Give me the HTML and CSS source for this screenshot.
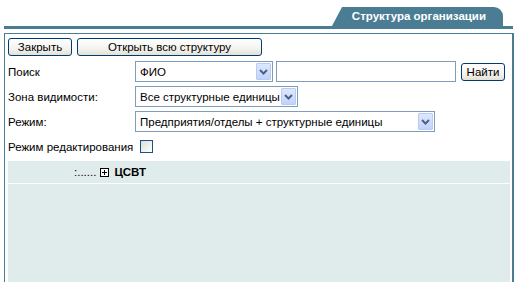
FILE: index.html
```html
<!DOCTYPE html>
<html lang="ru">
<head>
  <meta charset="UTF-8">
  <title>Структура организации</title>
  <link rel="stylesheet" href="styles.css">
</head>
<body>
  <!-- Header with tab -->
  <div class="header">
    <div class="tab">Структура организации</div>
  </div>

  <div class="frame">
    <div class="toolbar">
      <button class="btn btn-close">Закрыть</button>
      <button class="btn btn-open">Открыть всю структуру</button>
    </div>

    <div class="row">
      <div class="label">Поиск</div>
      <div class="select select-fio">
        <span class="select-text">ФИО</span>
        <span class="select-arrow"><svg width="9" height="6" viewBox="0 0 9 6"><path d="M1 1 L4.5 4.5 L8 1" fill="none" stroke="#4d6185" stroke-width="2"/></svg></span>
      </div>
      <input class="search-input" type="text">
      <button class="btn btn-find">Найти</button>
    </div>

    <div class="row">
      <div class="label">Зона видимости:</div>
      <div class="select select-zone">
        <span class="select-text">Все структурные единицы</span>
        <span class="select-arrow"><svg width="9" height="6" viewBox="0 0 9 6"><path d="M1 1 L4.5 4.5 L8 1" fill="none" stroke="#4d6185" stroke-width="2"/></svg></span>
      </div>
    </div>

    <div class="row">
      <div class="label">Режим:</div>
      <div class="select select-mode">
        <span class="select-text">Предприятия/отделы + структурные единицы</span>
        <span class="select-arrow"><svg width="9" height="6" viewBox="0 0 9 6"><path d="M1 1 L4.5 4.5 L8 1" fill="none" stroke="#4d6185" stroke-width="2"/></svg></span>
      </div>
    </div>

    <div class="row row-edit">
      <div class="label-edit">Режим редактирования</div>
      <span class="checkbox"></span>
    </div>

    <div class="tree">
      <div class="tree-row">
        <span class="dots">:......</span>
        <span class="plus"><svg width="9" height="9" viewBox="0 0 9 9"><rect x="0.5" y="0.5" width="8" height="8" fill="#fff" stroke="#000"/><path d="M2 4.5 H7 M4.5 2 V7" stroke="#000"/></svg></span>
        <b class="node">ЦСВТ</b>
      </div>
    </div>
  </div>
</body>
</html>
```

FILE: styles.css
```css
* {
  box-sizing: border-box;
}

body {
  margin: 0;
  background-color: #fff;
  font-family: 'Liberation Sans', Arial, sans-serif;
  font-size: 11.5px;
  color: #000;
  overflow: hidden;
}

/* Header tab */
.header {
  display: flex;
  justify-content: flex-end;
  margin: 7px 5px 0 4px;
  padding-right: 10px;
  border-bottom: 3px solid #4a7d94;
}

.tab {
  position: relative;
  height: 19px;
  padding: 0 17px 0 10px;
  background-color: #4a7d94;
  color: #fff;
  font-weight: bold;
  line-height: 19px;
  border-top-right-radius: 9px;
}

.tab::before {
  content: '';
  position: absolute;
  left: -5px;
  top: 0;
  width: 12px;
  height: 19px;
  background-color: #4a7d94;
  transform: skewX(-28deg);
}

/* Main frame */
.frame {
  margin: 4px 4px 0 4px;
  height: 260px;
  border: 1px solid #4a7d94;
  border-right-width: 2px;
  border-bottom: none;
  padding: 4px 2px 0 3px;
}

.toolbar {
  display: flex;
  gap: 5px;
  margin-bottom: 5px;
}

.btn {
  height: 18px;
  padding: 0;
  border: 1px solid #003c74;
  border-radius: 3px;
  background: linear-gradient(#fff, #f4f3ee 60%, #e3e1d6);
  font-family: inherit;
  font-size: 11.5px;
  color: #000;
}

.btn-close {
  width: 64px;
}

.btn-open {
  width: 185px;
}

.row {
  display: flex;
  align-items: center;
  height: 21px;
  margin-bottom: 4px;
}

.label {
  width: 127px;
}

.select {
  display: flex;
  align-items: center;
  height: 21px;
  border: 1px solid #7f9db9;
  background-color: #fff;
  padding: 1px;
}

.select-text {
  flex: 1;
  padding-left: 3px;
  white-space: nowrap;
  overflow: hidden;
}

.select-arrow {
  display: flex;
  align-items: center;
  justify-content: center;
  flex-shrink: 0;
  width: 15px;
  height: 17px;
  border: 1px solid #b9cbf5;
  border-radius: 1px;
  background: linear-gradient(#dde8fd, #c2d3fb);
}

.select-fio {
  width: 138px;
}

.select-zone {
  width: 163px;
}

.select-mode {
  width: 300px;
}

.search-input {
  width: 180px;
  height: 21px;
  margin: 0 5px 0 3px;
  border: 1px solid #7f9db9;
}

.btn-find {
  width: 44px;
}

.row-edit {
  margin: 2px 0 4px;
}

.label-edit {
  margin-right: 7px;
}

.checkbox {
  width: 13px;
  height: 13px;
  border: 1px solid #1c5180;
  background: linear-gradient(135deg, #dcdcd7, #fff);
}

/* Tree */
.tree {
  background-color: #e0ecec;
  height: 124px;
}

.tree-row {
  display: flex;
  align-items: center;
  height: 23px;
  padding-left: 66px;
  border-bottom: 1px solid #fff;
}

.dots {
  margin-right: 4px;
}

.plus {
  display: flex;
  margin-right: 5px;
}

.node {
  font-weight: bold;
}
```
